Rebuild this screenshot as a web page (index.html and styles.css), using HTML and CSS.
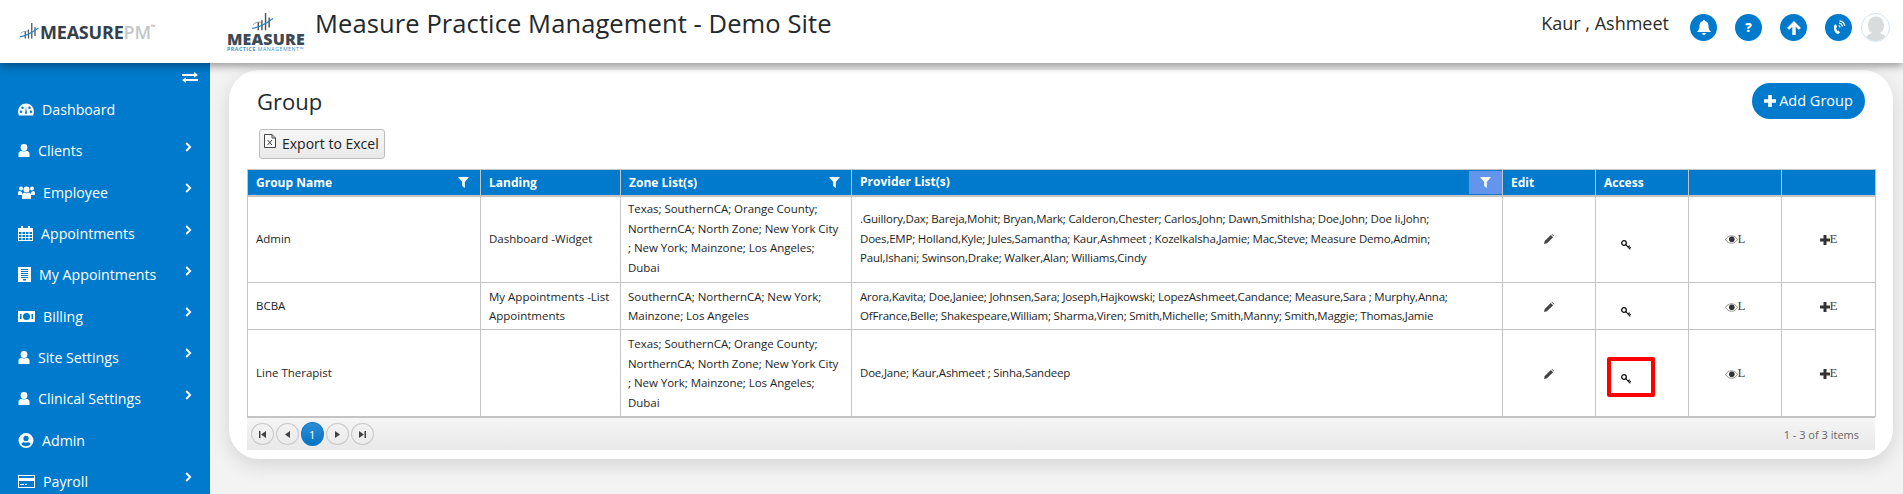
FILE: index.html
```html
<!DOCTYPE html>
<html lang="en">
<head>
<meta charset="utf-8">
<title>Group</title>
<link rel="stylesheet" href="styles.css">
</head>
<body>
<svg class="defs" width="0" height="0" aria-hidden="true">
  <symbol id="i-user" viewBox="0 0 11 13"><circle cx="5.500" cy="3.500" r="3.400"/><path d="M0 13V9.500C0 8 1.400 7.200 3 6.800 4.400 7.800 6.600 7.800 8 6.800 9.600 7.200 11 8 11 9.500V13Z"/></symbol>
  <symbol id="i-chev" viewBox="0 0 7 10"><path d="M1.200 1 5.200 5 1.200 9" fill="none" stroke="currentColor" stroke-width="1.800"/></symbol>
  <symbol id="i-filter" viewBox="0 0 11 11"><path d="M0 0H11L6.800 5V11L4.200 9V5Z"/></symbol>
  <symbol id="i-pencil" viewBox="0 0 10 10"><path d="M0 10 .7 7 6.800 .9 9.100 3.200 3 9.300Z" fill="#444"/><path d="M7.500.3 8.200 0 10 1.800 9.700 2.500Z" fill="#444"/></symbol>
  <symbol id="i-key" viewBox="0 0 10 10"><circle cx="3" cy="3" r="2.300" fill="none" stroke="#111" stroke-width="1.300"/><path d="M4.700 4.700 9.300 9.300M7 7 8.800 5.800M8.300 8.300 9.800 7.300" fill="none" stroke="#111" stroke-width="1.100"/></symbol>
  <symbol id="i-eye" viewBox="0 0 13 9"><path d="M.5 4.500C2 2 4 .8 6.500.8S11 2 12.500 4.500C11 7 9 8.200 6.500 8.200S2 7 .5 4.500Z" fill="none" stroke="#777" stroke-width=".8"/><circle cx="6.800" cy="4.300" r="2.800" fill="#333"/></symbol>
  <symbol id="i-plus" viewBox="0 0 10 10"><path d="M3.500 0H6.500V3.500H10V6.500H6.500V10H3.500V6.500H0V3.500H3.500Z"/></symbol>
  <symbol id="i-bars" viewBox="0 0 26 22"><path d="M7 10h1.600v9H7zM11 8h1.600v11H11zM15 0h1.600v19H15zM19 5h1.600v11H19z" fill="#4a5560"/><path d="M1 17C8 16 16 12 24 6" fill="none" stroke="#2f86c6" stroke-width="1.400"/><path d="M2 13C4 10 8 10 12 10" fill="none" stroke="#8a929a" stroke-width="1"/></symbol>
</svg>

<header class="topbar">
  <div class="brand">
    <svg class="brand-mark"><use href="#i-bars"/></svg>
    <span class="brand-text">MEASURE<span class="brand-pm">PM</span></span><span class="brand-tm">™</span>
  </div>
  <div class="site-logo">
    <svg class="site-mark"><use href="#i-bars"/></svg>
    <span class="site-word">MEASURE</span>
    <span class="site-sub">PRACTICE <span class="site-sub-thin">MANAGEMENT™</span></span>
  </div>
  <h1 class="site-title">Measure Practice Management - Demo Site</h1>
  <div class="user-name">Kaur , Ashmeet</div>
  <div class="top-icons">
    <span class="round-icon"><svg width="14" height="15" viewBox="0 0 14 15"><path d="M7 0C7.700 0 8 .5 8 1 10.500 1.500 11.500 3.500 11.500 6 11.500 9 12.500 10.500 14 12H0C1.500 10.500 2.500 9 2.500 6 2.500 3.500 3.500 1.500 6 1 6 .5 6.300 0 7 0ZM5.200 13H8.800C8.800 14.200 8 15 7 15S5.200 14.200 5.200 13Z" fill="#fff"/></svg></span>
    <span class="round-icon"><span class="q-mark">?</span></span>
    <span class="round-icon"><svg width="14" height="14" viewBox="0 0 14 14"><path d="M7 0 14 7 11.800 8.800 8.700 5.700V14H5.300V5.700L2.200 8.800 0 7Z" fill="#fff"/></svg></span>
    <span class="round-icon"><svg width="15" height="15" viewBox="0 0 15 15"><path d="M3.500 5 5 4.300 6 7 5 8 6.300 11 7.600 10.400 9 12.700 7 14C4 14 1.800 8 3.500 5Z" fill="#fff"/><path d="M7.500 5.500C8.500 5.700 9 6.300 9.200 7.300M8 3C10 3.300 11.200 4.500 11.500 6.500M8.500 .8C11.200 1.200 13.300 3 13.800 5.800" fill="none" stroke="#fff" stroke-width="1.200"/></svg></span>
    <span class="avatar"><svg width="26" height="26" viewBox="0 0 26 26"><path d="M13 1.500C8 1.500 5 5.500 5 10.500 5 14 6.500 16.500 9 18 6 19.500 3.500 20.500 3 22.500 5.500 25 9 26 13 26S20.500 25 23 22.500C22.500 20.500 20 19.500 17 18 19.500 16.500 21 14 21 10.500 21 5.500 18 1.500 13 1.500Z" fill="#d9dcdd"/></svg></span>
  </div>
</header>

<div class="shell">
  <aside class="sidebar">
    <div class="toggle-row">
      <svg width="16" height="11" viewBox="0 0 16 11"><path d="M0 2H12V0L16 3 12 5.500V4H0ZM16 7H4V5.500L0 8 4 11V9H16Z" fill="#fff"/></svg>
    </div>
    <nav class="nav">
      <a class="nav-item">
        <svg class="ni w16" viewBox="0 0 16 12"><path d="M8 0A8 8 0 0 0 0 8C0 9.500.4 10.800 1 12H15C15.600 10.800 16 9.500 16 8A8 8 0 0 0 8 0ZM3 9.500A1.200 1.200 0 1 1 3 7 1.200 1.200 0 0 1 3 9.500ZM4.500 5.500A1.200 1.200 0 1 1 4.500 3 1.200 1.200 0 0 1 4.500 5.500ZM8 10.500C7 10.500 6.700 9.500 7.200 8.800L8 3.500 8.800 8.800C9.300 9.500 9 10.500 8 10.500ZM11.500 5.500A1.200 1.200 0 1 1 11.500 3 1.200 1.200 0 0 1 11.500 5.500ZM13 9.500A1.200 1.200 0 1 1 13 7 1.200 1.200 0 0 1 13 9.500Z" fill-rule="evenodd"/></svg>
        <span>Dashboard</span>
      </a>
      <a class="nav-item">
        <svg class="ni w11"><use href="#i-user"/></svg><span>Clients</span>
        <svg class="chev"><use href="#i-chev"/></svg>
      </a>
      <a class="nav-item">
        <svg class="ni w16b" viewBox="0 0 17 13"><circle cx="3" cy="2.500" r="2"/><circle cx="14" cy="2.500" r="2"/><circle cx="8.500" cy="3.500" r="3"/><path d="M0 9V6.500C0 5.500 1 5 2 5 3 5.800 3.600 6 4 6 3.800 7 4 8 4.500 9ZM17 9V6.500C17 5.500 16 5 15 5 14 5.800 13.400 6 13 6 13.200 7 13 8 12.500 9ZM4 13V9C4 7.500 5 7 6 6.500 7.500 7.500 9.500 7.500 11 6.500 12 7 13 7.500 13 9V13Z"/></svg>
        <span>Employee</span>
        <svg class="chev"><use href="#i-chev"/></svg>
      </a>
      <a class="nav-item">
        <svg class="ni w15" viewBox="0 0 15 15"><path d="M3 0H5V2H10V0H12V2H15V15H0V2H3ZM1 6V8H3.500V6ZM4.500 6V8H7V6ZM8 6V8H10.500V6ZM11.500 6V8H14V6ZM1 9V11H3.500V9ZM4.500 9V11H7V9ZM8 9V11H10.500V9ZM11.500 9V11H14V9ZM1 12V14H3.500V12ZM4.500 12V14H7V12ZM8 12V14H10.500V12ZM11.500 12V14H14V12Z" fill-rule="evenodd"/></svg>
        <span>Appointments</span>
        <svg class="chev"><use href="#i-chev"/></svg>
      </a>
      <a class="nav-item">
        <svg class="ni w13" viewBox="0 0 13 15"><path d="M0 0H13V15H0ZM3 2V3H10V2ZM3 4V5H10V4ZM3 6V7H10V6ZM3 8V9H10V8ZM3 10V11H10V10ZM5 12V13.500H8V12Z" fill-rule="evenodd"/></svg>
        <span>My Appointments</span>
        <svg class="chev"><use href="#i-chev"/></svg>
      </a>
      <a class="nav-item">
        <svg class="ni w16b" viewBox="0 0 17 11"><path d="M0 0H17V11H0ZM8.500 2A3.500 3.500 0 1 0 8.500 9 3.500 3.500 0 0 0 8.500 2ZM2 3V8H3.500V3ZM13.500 3V8H15V3Z" fill-rule="evenodd"/></svg>
        <span>Billing</span>
        <svg class="chev"><use href="#i-chev"/></svg>
      </a>
      <a class="nav-item">
        <svg class="ni w11"><use href="#i-user"/></svg><span>Site Settings</span>
        <svg class="chev"><use href="#i-chev"/></svg>
      </a>
      <a class="nav-item">
        <svg class="ni w11"><use href="#i-user"/></svg><span>Clinical Settings</span>
        <svg class="chev"><use href="#i-chev"/></svg>
      </a>
      <a class="nav-item">
        <svg class="ni w16" viewBox="0 0 16 16"><path d="M8 0A8 8 0 1 0 8 16 8 8 0 0 0 8 0ZM8 3A2.800 2.800 0 1 1 8 8.600 2.800 2.800 0 0 1 8 3ZM8 14.200C6 14.200 4.200 13.300 3 11.800 3.500 10.500 4.800 9.800 6 9.800 7.300 10.300 8.700 10.300 10 9.800 11.200 9.800 12.500 10.500 13 11.800 11.800 13.300 10 14.200 8 14.200Z" fill-rule="evenodd"/></svg>
        <span>Admin</span>
      </a>
      <a class="nav-item">
        <svg class="ni w16b" viewBox="0 0 17 13"><path d="M0 0H17V13H0ZM1 1V3H16V1ZM1 6V12H16V6ZM2 9H6V10H2ZM7 9H9V10H7Z" fill-rule="evenodd"/></svg>
        <span>Payroll</span>
        <svg class="chev"><use href="#i-chev"/></svg>
      </a>
    </nav>
  </aside>

  <main class="content">
    <section class="card">
      <div class="title-row">
        <h2 class="page-title">Group</h2>
        <button class="add-btn"><svg class="add-plus"><use href="#i-plus"/></svg>Add Group</button>
      </div>
      <button class="export-btn">
        <svg class="xl-icon" width="12" height="14" viewBox="0 0 12 14"><path d="M.5.5H8L11.500 4V13.500H.5Z" fill="#fff" stroke="#444"/><path d="M8 .5V4H11.500" fill="none" stroke="#444"/><path d="M3.500 6 8 11M8 6 3.500 11" stroke="#333" stroke-width="1"/></svg>
        Export to Excel
      </button>

      <div class="grid">
        <table class="grid-table">
          <colgroup>
            <col class="c-name"><col class="c-land"><col class="c-zone"><col class="c-prov"><col class="c-act"><col class="c-act"><col class="c-act"><col class="c-last">
          </colgroup>
          <thead>
            <tr>
              <th><span class="th-in">Group Name<svg class="filter"><use href="#i-filter"/></svg></span></th>
              <th>Landing</th>
              <th><span class="th-in">Zone List(s)<svg class="filter"><use href="#i-filter"/></svg></span></th>
              <th class="th-active"><span class="th-in">Provider List(s)<span class="filter-on"><svg class="filter"><use href="#i-filter"/></svg></span></span></th>
              <th>Edit</th>
              <th>Access</th>
              <th></th>
              <th></th>
            </tr>
          </thead>
          <tbody>
            <tr class="r-tall r-first">
              <td>Admin</td>
              <td>Dashboard -Widget</td>
              <td class="zone">Texas; SouthernCA; Orange County; NorthernCA; North Zone; New York City ; New York; Mainzone; Los Angeles; Dubai</td>
              <td class="prov">.Guillory,Dax; Bareja,Mohit; Bryan,Mark; Calderon,Chester; Carlos,John; Dawn,SmithIsha; Doe,John; Doe Ii,John; Does,EMP; Holland,Kyle; Jules,Samantha; Kaur,Ashmeet ; KozelkaIsha,Jamie; Mac,Steve; Measure Demo,Admin; Paul,Ishani; Swinson,Drake; Walker,Alan; Williams,Cindy</td>
              <td class="act"><svg class="ic10"><use href="#i-pencil"/></svg></td>
              <td class="act-key"><svg class="ic10"><use href="#i-key"/></svg></td>
              <td class="act"><span class="pair"><svg class="ic-eye"><use href="#i-eye"/></svg>L</span></td>
              <td class="act"><span class="pair"><svg class="ic10 dark"><use href="#i-plus"/></svg>E</span></td>
            </tr>
            <tr class="r-short">
              <td>BCBA</td>
              <td>My Appointments -List Appointments</td>
              <td class="zone">SouthernCA; NorthernCA; New York; Mainzone; Los Angeles</td>
              <td class="prov">Arora,Kavita; Doe,Janiee; Johnsen,Sara; Joseph,Hajkowski; LopezAshmeet,Candance; Measure,Sara ; Murphy,Anna; OfFrance,Belle; Shakespeare,William; Sharma,Viren; Smith,Michelle; Smith,Manny; Smith,Maggie; Thomas,Jamie</td>
              <td class="act"><svg class="ic10"><use href="#i-pencil"/></svg></td>
              <td class="act-key"><svg class="ic10"><use href="#i-key"/></svg></td>
              <td class="act"><span class="pair"><svg class="ic-eye"><use href="#i-eye"/></svg>L</span></td>
              <td class="act"><span class="pair"><svg class="ic10 dark"><use href="#i-plus"/></svg>E</span></td>
            </tr>
            <tr class="r-tall">
              <td>Line Therapist</td>
              <td></td>
              <td class="zone">Texas; SouthernCA; Orange County; NorthernCA; North Zone; New York City ; New York; Mainzone; Los Angeles; Dubai</td>
              <td class="prov">Doe,Jane; Kaur,Ashmeet ; Sinha,Sandeep</td>
              <td class="act"><svg class="ic10"><use href="#i-pencil"/></svg></td>
              <td class="act-key marked"><svg class="ic10"><use href="#i-key"/></svg><span class="red-box"></span></td>
              <td class="act"><span class="pair"><svg class="ic-eye"><use href="#i-eye"/></svg>L</span></td>
              <td class="act"><span class="pair"><svg class="ic10 dark"><use href="#i-plus"/></svg>E</span></td>
            </tr>
          </tbody>
        </table>
        <div class="pager">
          <div class="pager-btns">
            <span class="pg"><svg width="9" height="9" viewBox="0 0 9 9"><path d="M1 1H2.500V8H1ZM8 1V8L3 4.500Z" fill="#444"/></svg></span>
            <span class="pg"><svg width="9" height="9" viewBox="0 0 9 9"><path d="M7 1V8L2 4.500Z" fill="#444"/></svg></span>
            <span class="pg pg-on">1</span>
            <span class="pg"><svg width="9" height="9" viewBox="0 0 9 9"><path d="M2 1V8L7 4.500Z" fill="#444"/></svg></span>
            <span class="pg"><svg width="9" height="9" viewBox="0 0 9 9"><path d="M1 1V8L6 4.500ZM6.500 1H8V8H6.500Z" fill="#444"/></svg></span>
          </div>
          <span class="pager-info">1 - 3 of 3 items</span>
        </div>
      </div>
    </section>
  </main>
</div>
</body>
</html>
```

FILE: styles.css
```css
* { box-sizing: border-box; }
html, body { height: 100%; margin: 0; overflow: hidden; }
body {
  display: flex;
  flex-direction: column;
  font-family: "Open Sans", "Liberation Sans", sans-serif;
  background: #f3f3f3;
  color: #222;
}
.defs { position: absolute; }

/* top bar */
.topbar {
  flex: none;
  height: 63px;
  background: #fff;
  display: flex;
  align-items: flex-start;
  box-shadow: 0 3px 8px rgba(0, 0, 0, .38);
  position: relative;
  z-index: 2;
}
.brand {
  width: 227px;
  flex: none;
  display: flex;
  align-items: center;
  padding: 22px 0 0 19px;
}
.brand-mark { width: 21px; height: 18px; }
.brand-text { font: 700 18px/20px "Open Sans", sans-serif; color: #33404b; letter-spacing: -.2px; }
.brand-pm { color: #c3c7cb; font-weight: 600; }
.brand-tm { font-size: 6px; line-height: 8px; color: #999; margin-bottom: 10px; }
.site-logo {
  width: 88px;
  flex: none;
  height: 63px;
  display: flex;
  flex-direction: column;
  padding-top: 13px;
}
.site-mark { width: 28px; height: 20px; margin-left: 22px; flex: none; }
.site-word { font: 800 16px/13px "Open Sans", sans-serif; color: #3d4a56; letter-spacing: .15px; }
.site-sub { font: 700 5.200px/7px "Open Sans", sans-serif; color: #3c8fd0; letter-spacing: .55px; white-space: nowrap; }
.site-sub-thin { font-weight: 400; }
.site-title {
  margin: 6px 0 0;
  font-size: 25.500px;
  line-height: 34px;
  font-weight: 400;
  color: #23282d;
  letter-spacing: .1px;
  white-space: nowrap;
}
.user-name {
  margin: 10px 0 0 auto;
  font-size: 18px;
  line-height: 26px;
  color: #2b2b2b;
}
.top-icons {
  display: flex;
  align-items: center;
  gap: 18px;
  margin: 13px 13px 0 21px;
}
.round-icon {
  width: 27px;
  height: 27px;
  border-radius: 50%;
  background: #007acc;
  display: flex;
  align-items: center;
  justify-content: center;
}
.q-mark { color: #fff; font: 800 13px/1 "Open Sans", sans-serif; }
.avatar {
  width: 29px;
  height: 29px;
  margin-left: -9px;
  border: 1px solid #d5e6f4;
  border-radius: 50%;
  overflow: hidden;
  display: flex;
  justify-content: center;
  align-items: flex-end;
  background: #fff;
}

/* shell */
.shell { flex: 1; min-height: 0; display: flex; }
.sidebar {
  width: 210px;
  flex: none;
  background: #007acc;
  color: #fff;
  overflow: hidden;
}
.toggle-row {
  height: 26px;
  display: flex;
  justify-content: flex-end;
  padding: 9px 12px 0 0;
}
.nav { display: flex; flex-direction: column; }
.nav-item {
  height: 41.300px;
  flex: none;
  display: flex;
  align-items: center;
  gap: 8px;
  padding: 0 18px;
  font-size: 14.200px;
  color: #fff;
}
.ni { fill: #fff; flex: none; height: 15px; }
.w11 { width: 12px; height: 13px; }
.w13 { width: 13px; }
.w15 { width: 15px; }
.w16 { width: 16px; }
.w16b { width: 17px; }
.chev {
  width: 7px;
  height: 10px;
  margin: -8px 0 0 auto;
  color: #fff;
}

/* content */
.content {
  flex: 1;
  min-width: 0;
  padding: 7px 10px 0 19px;
}
.card {
  background: #fff;
  border-radius: 30px;
  height: 389px;
  padding: 13px 18px 9px;
  box-shadow: 0 6px 20px rgba(0, 0, 0, .13);
}
.title-row {
  display: flex;
  justify-content: space-between;
  align-items: flex-start;
  height: 36px;
}
.page-title {
  margin: 2px 0 0 10px;
  font-size: 22px;
  line-height: 32px;
  font-weight: 400;
  color: #23282d;
}
.add-btn {
  width: 113px;
  height: 36px;
  margin-right: 10px;
  border: 0;
  border-radius: 18px;
  background: #007acc;
  color: #fff;
  font: 400 14.500px/36px "Open Sans", sans-serif;
  padding: 0;
  display: flex;
  align-items: center;
  justify-content: center;
  gap: 3px;
}
.add-plus { width: 12px; height: 12px; fill: #fff; }
.export-btn {
  display: flex;
  align-items: center;
  gap: 6px;
  width: 126px;
  height: 30px;
  margin: 10px 0 10px 12px;
  padding: 0 0 0 4px;
  background: linear-gradient(#f6f6f6, #e9e9e9);
  border: 1px solid #bdbdbd;
  border-radius: 3px;
  font: 400 14px/28px "Open Sans", sans-serif;
  color: #222;
  white-space: nowrap;
}
.xl-icon { margin-top: -6px; flex: none; }

/* grid */
.grid { width: 1628px; }
.grid-table {
  width: 1628px;
  table-layout: fixed;
  border-collapse: collapse;
  font-size: 11.500px;
  line-height: 19.500px;
  color: #1e1e1e;
}
.c-name { width: 233px; }
.c-land { width: 140px; }
.c-zone { width: 231px; }
.c-prov { width: 651px; }
.c-act { width: 93px; }
.c-last { width: 94px; }
th {
  height: 26px;
  background: #007acc;
  color: #fff;
  font-size: 12px;
  font-weight: 700;
  line-height: 20px;
  text-align: left;
  padding: 1px 8px 0;
  border: 1px solid #c4c4c4;
  border-width: 1px 1px 2px;
}
.th-in { display: flex; justify-content: space-between; align-items: center; }
.filter { width: 11px; height: 11px; fill: #fff; margin-right: 3px; }
.th-active { padding: 0 0 0 8px; }
.filter-on {
  width: 33px;
  height: 23px;
  background: #6495ed;
  display: flex;
  align-items: center;
  justify-content: center;
}
.filter-on .filter { margin: 0; }
td {
  padding: 3px 8px;
  border: 1px solid #c4c4c4;
  vertical-align: middle;
}
.r-first td { padding-top: 2px; padding-bottom: 4px; }
.zone { padding-left: 7px; letter-spacing: -.04px; }
.prov { padding-right: 30px; letter-spacing: -.2px; }
.r-first .act-key,
.act-key { padding: 9px 0 0 25px; }
.r-tall { height: 87px; }
.r-short { height: 47px; }
.act { text-align: center; }
.marked { position: relative; }
.ic10 { width: 10px; height: 10px; vertical-align: middle; }
.dark { fill: #333; }
.ic-eye { width: 13px; height: 9px; vertical-align: middle; }
.pair {
  font-family: "Liberation Serif", serif;
  font-size: 13px;
  color: #444;
}
.red-box {
  position: absolute;
  left: 11px;
  top: 27px;
  width: 48px;
  height: 40px;
  border: 4px solid #f00;
  border-radius: 2px;
}
.pager {
  height: 33px;
  background: linear-gradient(#f5f5f5, #e9e9e9);
  border-top: 1px solid #c4c4c4;
  display: flex;
  align-items: center;
  justify-content: space-between;
  padding: 0 16px 0 4px;
}
.pager-btns { display: flex; align-items: center; gap: 2.500px; }
.pg {
  width: 22.500px;
  height: 22px;
  border: 1px solid #c9c9c9;
  border-radius: 50%;
  display: flex;
  align-items: center;
  justify-content: center;
  font-size: 11px;
}
.pg-on {
  height: 24px;
  background: linear-gradient(#2d8dd6, #0973c4);
  border-color: #0a78c8;
  color: #fff;
}
.pager-info { font-size: 11px; color: #666; }
```
